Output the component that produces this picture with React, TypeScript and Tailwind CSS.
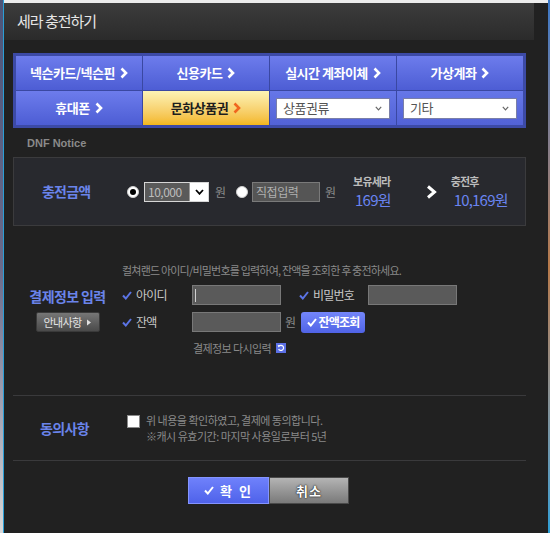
import React from "react";

const KR = { fontFamily: '"Noto Sans CJK KR", "Noto Sans", sans-serif' };

function Chevron({ color = "#ffffff" }: { color?: string }) {
  return (
    <svg width="8" height="12" viewBox="0 0 8 12" className="ml-[5px] shrink-0">
      <polyline points="1.5,1.5 6,6 1.5,10.5" fill="none" stroke={color} strokeWidth="2.6" />
    </svg>
  );
}

function Check({ color = "#5b74e6" }: { color?: string }) {
  return (
    <svg width="10" height="9" viewBox="0 0 10 9" className="shrink-0">
      <polyline points="1,4.5 3.8,7.5 9,1" fill="none" stroke={color} strokeWidth="2" />
    </svg>
  );
}

function SmallArrow() {
  return (
    <svg width="6" height="7" viewBox="0 0 6 7" className="shrink-0">
      <polygon points="1,0.5 5,3.5 1,6.5" fill="#e0e0e0" />
    </svg>
  );
}

function Tab({ label }: { label: string }) {
  return (
    <div className="h-[34px] flex items-center justify-center bg-gradient-to-b from-[#6d7cec] to-[#4d5dd4] text-white text-[13px] font-bold tracking-[-0.5px]">
      {label}
      <Chevron />
    </div>
  );
}

function SelectCell({ label }: { label: string }) {
  return (
    <div className="h-[34px] flex items-center px-[6px] bg-gradient-to-b from-[#6677e8] to-[#5262d6]">
      <div className="w-full h-[21px] bg-white border border-[#7a7fa8] flex items-center justify-between pl-[6px] pr-[7px]">
        <span className="text-[13px] text-[#555] tracking-[-0.5px]">{label}</span>
        <svg width="7" height="5" viewBox="0 0 7 5">
          <polyline points="0.8,0.8 3.5,3.8 6.2,0.8" fill="none" stroke="#666" strokeWidth="1.2" />
        </svg>
      </div>
    </div>
  );
}

function Radio({ checked }: { checked?: boolean }) {
  return (
    <div className="w-[12px] h-[12px] rounded-full bg-white border border-[#cfcfcf] flex items-center justify-center shrink-0">
      {checked && <div className="w-[6px] h-[6px] rounded-full bg-black" />}
    </div>
  );
}

export default function App() {
  return (
    <div className="flex h-[533px] w-[550px] overflow-hidden bg-[#212121]" style={KR}>
      {/* desktop behind the window */}
      <div className="w-[3px] bg-gradient-to-b from-[#4c5478] via-[#6a6a8a] to-[#d8d8d8]" />
      <div className="w-[1px] bg-[#2a9fd6]" />

      <div className="flex-1 flex flex-col">
        <div className="h-[3px] bg-[#ececec]" />

        {/* title bar */}
        <div className="h-[37px] w-[530px] bg-gradient-to-b from-[#3c3c3c] to-[#2b2b2b] flex items-center pl-[13px]">
          <span className="text-[15px] text-[#e6e6e6] tracking-[-1px]">세라 충전하기</span>
        </div>

        <div className="ml-[9px] w-[513px] flex flex-col">
          {/* payment methods */}
          <div className="mt-[13px] border-[3px] border-[#3c4aa6] bg-[#3a48a2] grid grid-cols-4 gap-px">
            <Tab label="넥슨카드/넥슨핀" />
            <Tab label="신용카드" />
            <Tab label="실시간 계좌이체" />
            <Tab label="가상계좌" />
            <Tab label="휴대폰" />
            <div className="h-[34px] flex items-center justify-center bg-gradient-to-b from-[#fcf3b4] to-[#f3b718] text-[#1e1e1e] text-[13px] font-bold tracking-[-0.5px]">
              문화상품권
              <Chevron color="#f0661e" />
            </div>
            <SelectCell label="상품권류" />
            <SelectCell label="기타" />
          </div>

          <div
            className="mt-[8px] ml-[14px] text-[11px] leading-[14px] font-bold text-[#8a8a8a]"
            style={{ fontFamily: '"Liberation Sans", Arial, sans-serif' }}
          >
            DNF Notice
          </div>

          {/* amount */}
          <div className="mt-[7px] h-[69px] border border-[#3b3b3d] bg-[#28292e] flex items-center">
            <div className="w-[113px] pl-[28px] text-[14px] font-bold text-[#6a84ea] tracking-[-0.8px]">충전금액</div>
            <Radio checked />
            <div className="ml-[5px] w-[65px] h-[20px] border border-[#d6d6d6] flex bg-[#5a5a5a]">
              <span className="flex-1 text-[12px] leading-[18px] pl-[3px] text-[#bdbdbd] tracking-[-0.5px]">10,000</span>
              <div className="w-[19px] bg-white border-l border-[#999] flex items-center justify-center">
                <svg width="9" height="6" viewBox="0 0 9 6">
                  <polyline points="1,1 4.5,4.8 8,1" fill="none" stroke="#000" strokeWidth="1.8" />
                </svg>
              </div>
            </div>
            <span className="ml-[6px] text-[12px] text-[#8a8a8a]">원</span>
            <div className="ml-[10px]">
              <Radio />
            </div>
            <div className="ml-[4px] w-[68px] h-[20px] border border-[#7a7a7a] bg-[#555] text-[12px] leading-[18px] pl-[3px] text-[#b0b0b0] tracking-[-0.5px]">
              직접입력
            </div>
            <span className="ml-[5px] text-[12px] text-[#8a8a8a]">원</span>

            <div className="ml-[17px] flex flex-col items-start">
              <span className="text-[11px] leading-[16px] font-bold text-[#bcbcbc] tracking-[-0.8px]">보유세라</span>
              <span className="ml-[2px] text-[15px] leading-[21px] text-[#6a84f0] tracking-[-0.8px]">169원</span>
            </div>
            <svg width="12" height="14" viewBox="0 0 12 14" className="ml-[35px]">
              <polyline points="2,1.5 8.5,7 2,12.5" fill="none" stroke="#fff" strokeWidth="3" />
            </svg>
            <div className="ml-[13px] flex flex-col items-start">
              <span className="text-[11px] leading-[16px] font-bold text-[#bcbcbc] tracking-[-0.8px]">충전후</span>
              <span className="ml-[3px] text-[15px] leading-[21px] text-[#6a84f0] tracking-[-0.8px]">10,169원</span>
            </div>
          </div>

          {/* payment info */}
          <div className="mt-[37px] flex">
            <div className="w-[109px] flex flex-col items-center pt-[23px]">
              <span className="text-[14px] leading-[20px] font-bold text-[#6a84ea] tracking-[-0.6px]">결제정보 입력</span>
              <div className="mt-[6px] w-[64px] h-[20px] rounded-[2px] border border-[#3a3a3a] bg-gradient-to-b from-[#767676] to-[#4a4a4a] flex items-center justify-center gap-[4px]">
                <span className="text-[11px] text-[#e4e4e4] tracking-[-0.6px]">안내사항</span>
                <SmallArrow />
              </div>
            </div>

            <div className="flex flex-col">
              <span className="text-[11px] leading-[14px] text-[#8a8a8a] tracking-[-0.8px]">
                컬쳐랜드 아이디/비밀번호를 입력하여, 잔액을 조회한 후 충전하세요.
              </span>

              <div className="mt-[8px] flex items-center h-[20px]">
                <div className="w-[70px] flex items-center gap-[4px]">
                  <Check />
                  <span className="text-[12px] text-[#c8c8c8] tracking-[-0.8px]">아이디</span>
                </div>
                <div className="w-[89px] h-[20px] border border-[#787878] bg-[#5a5a5a] flex items-center pl-[2px]">
                  <div className="w-px h-[13px] bg-[#d0d0d0]" />
                </div>
                <div className="ml-[18px] w-[69px] flex items-center gap-[4px]">
                  <Check />
                  <span className="text-[12px] text-[#c8c8c8] tracking-[-0.8px]">비밀번호</span>
                </div>
                <div className="w-[89px] h-[20px] border border-[#787878] bg-[#5a5a5a]" />
              </div>

              <div className="mt-[7px] flex items-center h-[20px]">
                <div className="w-[70px] flex items-center gap-[4px]">
                  <Check />
                  <span className="text-[12px] text-[#c8c8c8] tracking-[-0.8px]">잔액</span>
                </div>
                <div className="w-[89px] h-[20px] border border-[#787878] bg-[#5a5a5a]" />
                <span className="ml-[4px] text-[12px] text-[#8a8a8a]">원</span>
                <div className="ml-[5px] w-[64px] h-[21px] rounded-[3px] bg-gradient-to-b from-[#7486fa] to-[#5063e6] flex items-center justify-center gap-[2px]">
                  <Check color="#ffffff" />
                  <span className="text-[12px] font-bold text-white tracking-[-0.8px]">잔액조회</span>
                </div>
              </div>

              <div className="mt-[9px] ml-[71px] flex items-center gap-[5px] h-[14px]">
                <span className="text-[11px] text-[#8a8a8a] tracking-[-0.6px]">결제정보 다시입력</span>
                <svg width="10" height="10" viewBox="0 0 10 10">
                  <rect width="10" height="10" fill="#5c70e6" />
                  <path d="M3 3.2 A2.6 2.6 0 1 1 2.6 6" fill="none" stroke="#fff" strokeWidth="1.2" />
                  <polygon points="1.6,2 4.2,2.4 2.6,4.6" fill="#fff" />
                </svg>
              </div>
            </div>
          </div>

          {/* agreement */}
          <div className="mt-[40px] h-px bg-[#3a3a3c]" />
          <div className="h-[64px] flex items-center">
            <div className="w-[114px] pl-[27px] text-[14px] font-bold text-[#6a84ea] tracking-[-0.6px]">동의사항</div>
            <div className="self-start mt-[19px] w-[13px] h-[13px] bg-white border border-[#8a8a8a]" />
            <div className="ml-[6px] flex flex-col">
              <span className="text-[11px] leading-[16px] text-[#8a8a8a] tracking-[-0.5px]">위 내용을 확인하였고, 결제에 동의합니다.</span>
              <span className="text-[11px] leading-[16px] text-[#8a8a8a] tracking-[-0.5px]">※캐시 유효기간: 마지막 사용일로부터 5년</span>
            </div>
          </div>
          <div className="h-px bg-[#3a3a3c]" />

          {/* buttons */}
          <div className="mt-[16px] flex justify-center pr-[2px]">
            <div className="w-[81px] h-[27px] border border-[#8494ff] bg-gradient-to-b from-[#6f81fb] to-[#4f62ea] flex items-center justify-center gap-[6px]">
              <Check color="#ffffff" />
              <span className="text-[13px] font-bold text-white tracking-[2px]">확 인</span>
            </div>
            <div className="w-[80px] h-[27px] border border-[#4a4a4a] bg-gradient-to-b from-[#b4b4b4] to-[#7a7a7a] flex items-center justify-center">
              <span
                className="text-[13px] font-bold text-white tracking-[1px]"
                style={{ textShadow: "0 0 2px #222, 0 0 1px #000" }}
              >
                취소
              </span>
            </div>
          </div>
        </div>
      </div>

      <div className="w-[2px] bg-gradient-to-b from-[#3a78c8] via-[#b87a4a] to-[#2a9fd6]" />
    </div>
  );
}
